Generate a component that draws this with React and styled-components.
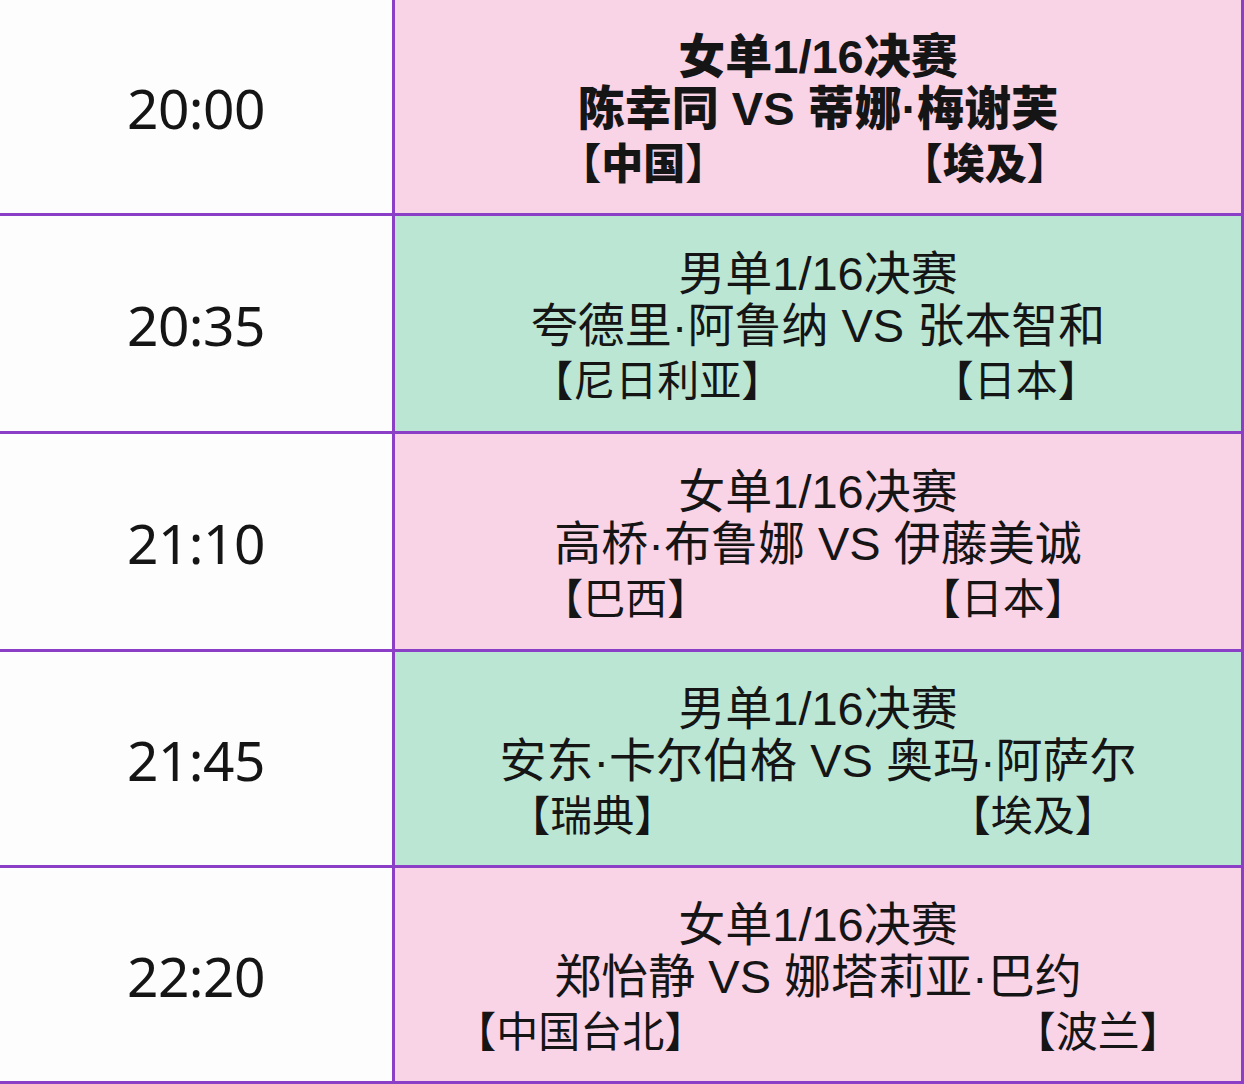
import React from "react";
import styled, { createGlobalStyle } from "styled-components";

const GlobalStyle = createGlobalStyle`
  html, body {
    margin: 0;
    padding: 0;
    background: #fdfdfe;
  }
`;

const Table = styled.div`
  width: 1244px;
  display: flex;
  flex-direction: column;
  font-family: "Liberation Sans", "Noto Sans CJK SC", sans-serif;
  color: #151515;
`;

const Row = styled.div`
  display: grid;
  grid-template-columns: 395px 1fr;
  height: ${(p) => p.$height}px;
  border-bottom: 3px solid #8a3fc6;
  box-sizing: border-box;
`;

const TimeCell = styled.div`
  display: flex;
  align-items: center;
  justify-content: center;
  background: #fdfdfe;
  border-right: 3px solid #8a3fc6;
  font-family: "Noto Sans", "Open Sans", sans-serif;
  font-size: 55px;
  letter-spacing: -0.5px;
  padding-top: 2px;
`;

const MatchCell = styled.div`
  display: flex;
  flex-direction: column;
  justify-content: center;
  background: ${(p) => (p.$kind === "men" ? "#bbe6d3" : "#f9d3e6")};
  border-right: 3px solid #8a3fc6;
  font-weight: ${(p) => (p.$bold ? 900 : 400)};
  padding-top: 4px;
`;

const Line = styled.div`
  text-align: center;
  font-size: 47px;
  line-height: 52px;
  white-space: nowrap;
`;

const Countries = styled.div`
  display: flex;
  justify-content: space-between;
  padding: 0 ${(p) => p.$right}px 0 ${(p) => p.$left}px;
  font-family: "Noto Sans CJK SC", sans-serif;
  font-size: 42px;
  line-height: 52px;
  white-space: nowrap;
`;

const Country = styled.span`
  margin: 0 -0.28em;
`;

const matches = [
  {
    time: "20:00",
    kind: "women",
    bold: true,
    title: "女单1/16决赛",
    names: "陈幸同 VS 蒂娜·梅谢芙",
    a: "中国",
    b: "埃及",
    left: 176,
    right: 184,
    height: 216,
  },
  {
    time: "20:35",
    kind: "men",
    title: "男单1/16决赛",
    names: "夸德里·阿鲁纳 VS 张本智和",
    a: "尼日利亚",
    b: "日本",
    left: 148,
    right: 153,
    height: 218,
  },
  {
    time: "21:10",
    kind: "women",
    title: "女单1/16决赛",
    names: "高桥·布鲁娜 VS 伊藤美诚",
    a: "巴西",
    b: "日本",
    left: 158,
    right: 166,
    height: 218,
  },
  {
    time: "21:45",
    kind: "men",
    title: "男单1/16决赛",
    names: "安东·卡尔伯格 VS 奥玛·阿萨尔",
    a: "瑞典",
    b: "埃及",
    left: 125,
    right: 136,
    height: 216,
  },
  {
    time: "22:20",
    kind: "women",
    title: "女单1/16决赛",
    names: "郑怡静 VS 娜塔莉亚·巴约",
    a: "中国台北",
    b: "波兰",
    left: 71,
    right: 71,
    height: 216,
  },
];

export default function App() {
  return (
    <>
      <GlobalStyle />
      <Table>
        {matches.map((m) => (
          <Row key={m.time} $height={m.height}>
            <TimeCell>{m.time}</TimeCell>
            <MatchCell $kind={m.kind} $bold={m.bold}>
              <Line>{m.title}</Line>
              <Line>{m.names}</Line>
              <Countries $left={m.left} $right={m.right}>
                <Country>【{m.a}】</Country>
                <Country>【{m.b}】</Country>
              </Countries>
            </MatchCell>
          </Row>
        ))}
      </Table>
    </>
  );
}
